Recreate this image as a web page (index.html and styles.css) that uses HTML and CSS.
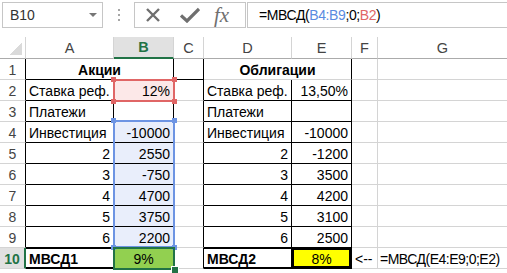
FILE: index.html
```html
<!DOCTYPE html>
<html>
<head>
    <title>МВСД</title>
    <link rel="stylesheet" href="styles.css">
</head>
<body>
    <div class="topbar">
        <div class="namebox">
            <span class="cellref">B10</span>
            <span class="caret"></span>
        </div>
        <div class="grip"><i></i><i></i><i></i></div>
        <div class="fxbtns">
            <svg class="btn-x" width="16" height="16" viewBox="0 0 16 16">
                <path d="M2 2 L14 14 M14 2 L2 14" stroke="#6f6f6f" stroke-width="2.4" fill="none"/>
            </svg>
            <svg class="btn-ok" width="20" height="16" viewBox="0 0 20 16">
                <path d="M1 8.5 L7 14 L19 2" stroke="#6f6f6f" stroke-width="3.2" fill="none"/>
            </svg>
            <span class="btn-fx">fx</span>
        </div>
        <div class="formula">=МВСД(<span class="ref-blue">B4:B9</span>;0;<span class="ref-red">B2</span>)</div>
    </div>

    <div class="sheet">
        <table class="grid">
            <colgroup>
                <col style="width:26px">
                <col style="width:88px">
                <col style="width:60px">
                <col style="width:30px">
                <col style="width:88px">
                <col style="width:60px">
                <col style="width:26px">
                <col style="width:130px">
            </colgroup>
            <tr class="colhead">
                <th class="corner"><span class="tri"></span></th>
                <th>A</th>
                <th class="active">B</th>
                <th>C</th>
                <th>D</th>
                <th>E</th>
                <th>F</th>
                <th>G</th>
            </tr>
            <tr>
                <th class="rh bk">1</th>
                <td colspan="2" class="bk title">Акции</td>
                <td class="bk"></td>
                <td colspan="2" class="bk title">Облигации</td>
                <td></td>
                <td></td>
            </tr>
            <tr>
                <th class="rh bk">2</th>
                <td class="bk">Ставка реф.</td>
                <td class="bk num pink">12%</td>
                <td class="bk"></td>
                <td class="bk">Ставка реф.</td>
                <td class="bk num">13,50%</td>
                <td></td>
                <td></td>
            </tr>
            <tr>
                <th class="rh bk">3</th>
                <td class="bk">Платежи</td>
                <td class="bk"></td>
                <td class="bk"></td>
                <td class="bk">Платежи</td>
                <td class="bk"></td>
                <td></td>
                <td></td>
            </tr>
            <tr>
                <th class="rh bk">4</th>
                <td class="bk">Инвестиция</td>
                <td class="bk num blue">-10000</td>
                <td class="bk"></td>
                <td class="bk">Инвестиция</td>
                <td class="bk num">-10000</td>
                <td></td>
                <td></td>
            </tr>
            <tr>
                <th class="rh bk">5</th>
                <td class="bk num">2</td>
                <td class="bk num blue">2550</td>
                <td class="bk"></td>
                <td class="bk num">2</td>
                <td class="bk num">-1200</td>
                <td></td>
                <td></td>
            </tr>
            <tr>
                <th class="rh bk">6</th>
                <td class="bk num">3</td>
                <td class="bk num blue">-750</td>
                <td class="bk"></td>
                <td class="bk num">3</td>
                <td class="bk num">3500</td>
                <td></td>
                <td></td>
            </tr>
            <tr>
                <th class="rh bk">7</th>
                <td class="bk num">4</td>
                <td class="bk num blue">4700</td>
                <td class="bk"></td>
                <td class="bk num">4</td>
                <td class="bk num">4200</td>
                <td></td>
                <td></td>
            </tr>
            <tr>
                <th class="rh bk">8</th>
                <td class="bk num">5</td>
                <td class="bk num blue">3750</td>
                <td class="bk"></td>
                <td class="bk num">5</td>
                <td class="bk num">3100</td>
                <td></td>
                <td></td>
            </tr>
            <tr>
                <th class="rh bk">9</th>
                <td class="bk num">6</td>
                <td class="bk num blue">2200</td>
                <td class="bk"></td>
                <td class="bk num">6</td>
                <td class="bk num">2500</td>
                <td></td>
                <td></td>
            </tr>
            <tr class="total">
                <th class="rh active">10</th>
                <td class="bk thick label">МВСД1</td>
                <td class="bk center green">9%</td>
                <td class="bk"></td>
                <td class="bk thick label">МВСД2</td>
                <td class="bk center yellow">8%</td>
                <td>&lt;--</td>
                <td class="note">=МВСД(E4:E9;0;E2)</td>
            </tr>
        </table>

        <div class="range range-red"><i class="tl"></i><i class="tr"></i><i class="bl"></i><i class="br"></i></div>
        <div class="range range-blue"><i class="tl"></i><i class="tr"></i><i class="bl"></i><i class="br"></i></div>
        <div class="range range-active"><i class="handle"></i></div>
    </div>
</body>
</html>
```

FILE: styles.css
```css
body {
    margin: 0;
    width: 507px;
    height: 273px;
    overflow: hidden;
    background-color: #fff;
    font-family: "Liberation Sans", Arial, sans-serif;
    color: #000;
}

/* formula bar */
.topbar {
    display: flex;
    height: 26px;
    padding: 2px 0 0 2px;
}

.namebox {
    box-sizing: border-box;
    width: 101px;
    height: 26px;
    border: 1px solid #c6c6c6;
    display: flex;
    align-items: center;
    justify-content: space-between;
    padding: 0 5px 0 7px;
}

.cellref {
    font-size: 14px;
    color: #333;
}

.caret {
    width: 0;
    height: 0;
    border-left: 4px solid transparent;
    border-right: 4px solid transparent;
    border-top: 4px solid #767676;
}

.grip {
    width: 31px;
    display: flex;
    flex-direction: column;
    align-items: center;
    justify-content: center;
    gap: 3px;
}

.grip i {
    display: block;
    width: 2px;
    height: 2px;
    background-color: #a6a6a6;
}

.fxbtns {
    box-sizing: border-box;
    width: 112px;
    height: 26px;
    border: 1px solid #c6c6c6;
    display: flex;
    align-items: center;
    padding-left: 10px;
}

.btn-x {
    margin-right: 19px;
}

.btn-ok {
    margin-right: 14px;
}

.btn-fx {
    font-family: "Liberation Serif", serif;
    font-style: italic;
    font-size: 21px;
    color: #6f6f6f;
    line-height: 1;
}

.formula {
    box-sizing: border-box;
    flex: 1;
    height: 26px;
    margin-left: 1px;
    border: 1px solid #c6c6c6;
    border-right: none;
    padding-left: 11px;
    font-size: 14px;
    letter-spacing: -0.4px;
    line-height: 24px;
    white-space: nowrap;
}

.ref-blue {
    color: #5b8be0;
}

.ref-red {
    color: #e06666;
}

/* sheet grid */
.sheet {
    position: relative;
    margin-top: 9px;
}

.grid {
    border-collapse: separate;
    border-spacing: 0;
    table-layout: fixed;
    width: 508px;
    font-size: 14px;
}

.grid tr {
    height: 21px;
}

.grid tr.colhead {
    height: 22px;
}

.grid th,
.grid td {
    padding: 0 3px;
    border-right: 1px solid #d4d4d4;
    border-bottom: 1px solid #d4d4d4;
    white-space: nowrap;
    overflow: hidden;
    line-height: 18px;
}

.grid td {
    vertical-align: bottom;
}

.grid td.note {
    padding-left: 2px;
    letter-spacing: -0.5px;
    overflow: visible;
}

.colhead th {
    font-weight: normal;
    color: #444;
    font-size: 14.5px;
    border-bottom-color: #ababab;
    vertical-align: middle;
}

.colhead th.active {
    background-color: #e1e1e1;
    color: #217346;
    font-weight: bold;
    border-bottom: 2px solid #217346;
}

.corner {
    position: relative;
}

.corner .tri {
    position: absolute;
    right: 3px;
    bottom: 3px;
    width: 12px;
    height: 12px;
    background: linear-gradient(to bottom right, transparent 50%, #dadada 50%);
}

.rh {
    font-weight: normal;
    color: #444;
    text-align: center;
    vertical-align: bottom;
    background-color: #fff;
}

.rh.active {
    background-color: #e1e1e1;
    color: #217346;
    font-weight: bold;
    border-right: 2px solid #217346;
}

.grid .bk {
    border-right-color: #000;
}

.grid td.bk {
    border-bottom-color: #000;
}

.grid td:nth-child(4) {
    border-bottom-color: #d4d4d4;
}

.title {
    text-align: center;
    font-weight: bold;
}

.num {
    text-align: right;
}

.center {
    text-align: center;
}

.label {
    font-weight: bold;
}

.thick {
    box-shadow: inset 0 1px 0 #000, inset 0 -1px 0 #000;
}

.pink {
    background-color: #fce8e8;
}

.blue {
    background-color: #e9eefb;
}

.green {
    background-color: #92d050;
}

.yellow {
    background-color: #ffff00;
    box-shadow: inset 0 0 0 2px #000;
}

/* selection frames */
.range {
    position: absolute;
    left: 113px;
    width: 58px;
    border: 2px solid;
}

.range i {
    position: absolute;
    width: 5px;
    height: 5px;
}

.range .tl { left: -4px; top: -4px; }
.range .tr { right: -4px; top: -4px; }
.range .bl { left: -4px; bottom: -4px; }
.range .br { right: -4px; bottom: -4px; }

.range-red {
    top: 42px;
    height: 19px;
    border-color: #e06666;
}

.range-red i {
    background-color: #e06666;
}

.range-blue {
    top: 83px;
    height: 124px;
    border-color: #6d94e3;
}

.range-blue i {
    background-color: #6d94e3;
}

.range-active {
    top: 210px;
    height: 19px;
    border-color: #217346;
}

.range-active .handle {
    right: -6px;
    bottom: -6px;
    width: 6px;
    height: 6px;
    background-color: #217346;
    border: 1px solid #fff;
}
```
